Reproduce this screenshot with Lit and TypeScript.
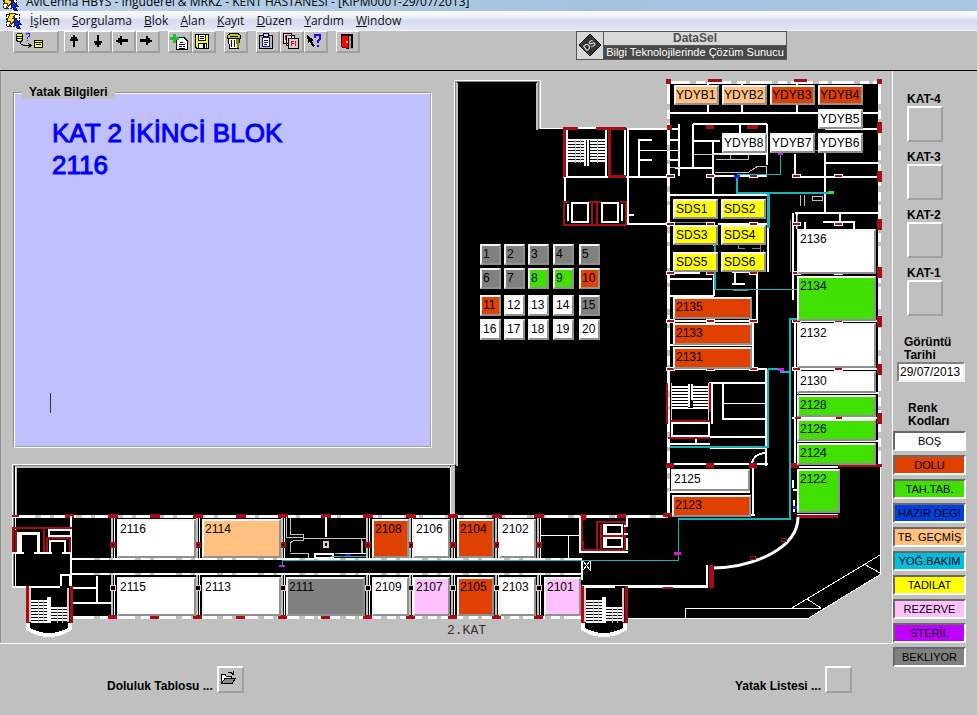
import { LitElement, html, css, svg } from "lit";
import { customElement, property } from "lit/decorators.js";
import { styleMap } from "lit/directives/style-map.js";

type Status = "bos" | "dolu" | "tahliye" | "hazir" | "gecmis" | "yogun" | "tadilat" | "rezerve" | "steril" | "bekliyor";
type Room = [label: string, x: number, y: number, w: number, h: number, status: Status];

const COLORS: Record<Status, string> = {
  bos: "#ffffff",
  dolu: "#e04000",
  tahliye: "#40e000",
  hazir: "#0040e0",
  gecmis: "#ffc080",
  yogun: "#00c0e0",
  tadilat: "#ffff00",
  rezerve: "#ffc0ff",
  steril: "#c000ff",
  bekliyor: "#808080",
};

const LEGEND: [string, Status][] = [
  ["BOŞ", "bos"],
  ["DOLU", "dolu"],
  ["TAH.TAB.", "tahliye"],
  ["HAZIR DEGI", "hazir"],
  ["TB. GEÇMİŞ", "gecmis"],
  ["YOĞ.BAKIM", "yogun"],
  ["TADILAT", "tadilat"],
  ["REZERVE", "rezerve"],
  ["STERİL", "steril"],
  ["BEKLIYOR", "bekliyor"],
];

/* Drawing coordinates of the plan start at this height. */
const PLAN_TOP = 71;

const ROOMS: Room[] = [
  ["YDYB1", 674, 85, 45, 20, "gecmis"],
  ["YDYB2", 722, 85, 45, 20, "gecmis"],
  ["YDYB3", 770, 85, 45, 20, "dolu"],
  ["YDYB4", 818, 85, 45, 20, "dolu"],
  ["YDYB5", 818, 109, 45, 20, "bos"],
  ["YDYB6", 818, 133, 45, 20, "bos"],
  ["YDYB7", 770, 133, 45, 20, "bos"],
  ["YDYB8", 722, 133, 45, 20, "bos"],
  ["SDS1", 673, 199, 45, 20, "tadilat"],
  ["SDS2", 721, 199, 45, 20, "tadilat"],
  ["SDS3", 673, 225, 45, 20, "tadilat"],
  ["SDS4", 721, 225, 45, 20, "tadilat"],
  ["SDS5", 673, 252, 45, 20, "tadilat"],
  ["SDS6", 721, 252, 45, 20, "tadilat"],
  ["2136", 797, 229, 79, 45, "bos"],
  ["2134", 797, 276, 79, 45, "tahliye"],
  ["2132", 797, 323, 79, 45, "bos"],
  ["2130", 797, 371, 79, 22, "bos"],
  ["2128", 797, 395, 79, 22, "tahliye"],
  ["2126", 797, 419, 79, 22, "tahliye"],
  ["2124", 797, 443, 79, 22, "tahliye"],
  ["2122", 797, 469, 43, 44, "tahliye"],
  ["2135", 673, 297, 79, 22, "dolu"],
  ["2133", 673, 323, 79, 22, "dolu"],
  ["2131", 673, 347, 79, 22, "dolu"],
  ["2125", 671, 469, 79, 22, "bos"],
  ["2123", 672, 495, 79, 22, "dolu"],
  ["2116", 117, 519, 79, 39, "bos"],
  ["2114", 202, 519, 79, 39, "gecmis"],
  ["2108", 372, 519, 37, 39, "dolu"],
  ["2106", 413, 519, 37, 39, "bos"],
  ["2104", 457, 519, 37, 39, "dolu"],
  ["2102", 499, 519, 37, 39, "bos"],
  ["2115", 117, 577, 79, 39, "bos"],
  ["2113", 202, 577, 79, 39, "bos"],
  ["2111", 286, 577, 79, 39, "bekliyor"],
  ["2109", 372, 577, 37, 39, "bos"],
  ["2107", 413, 577, 37, 39, "rezerve"],
  ["2105", 457, 577, 37, 39, "dolu"],
  ["2103", 499, 577, 37, 39, "bos"],
  ["2101", 544, 577, 37, 39, "rezerve"],
];

const BED_COLUMNS = [480, 504, 528, 553, 579];
const BED_ROWS = [244, 268, 295, 319];
const BED_STATUS: Partial<Record<number, Status>> = {
  1: "bekliyor", 2: "bekliyor", 3: "bekliyor", 4: "bekliyor", 5: "bekliyor", 6: "bekliyor", 7: "bekliyor",
  8: "tahliye", 9: "tahliye", 10: "dolu", 11: "dolu", 15: "bekliyor",
};
const BEDS: Room[] = Array.from({ length: 20 }, (_, i): Room => [
  String(i + 1), BED_COLUMNS[i % 5], BED_ROWS[Math.floor(i / 5)], 21, 21, BED_STATUS[i + 1] ?? "bos",
]);

const treads = (x1: number, x2: number, y1: number, y2: number) => {
  let d = "";
  for (let y = y1; y <= y2; y += 3) d += `M${x1} ${y}H${x2}`;
  return d;
};

const WING_COLUMNS = [113, 155, 198, 241, 283, 326, 368, 411, 453, 497, 539];
const WING_WALLS = [113, 198, 283, 368, 411, 453, 497, 539];

/* Stairwell with a bowed landing, used at both ends of the south wing. */
const stairwell = (x: number) => svg`
  <g transform="translate(${x} 586)">
    <path class="black" d="M0 0H46V44Q23 56 0 44Z"/>
    <path class="white" stroke-width="4" d="M2 37V43Q23 55 44 43V37"/>
    <path class="white" stroke-width="2" d="M0 1H34"/>
    <path class="pink" stroke-width="2" d="M4 2V36M42 2V36"/>
    <path class="white" stroke-width="2" d="${treads(5, 22, 15, 36)}${treads(22, 41, 22, 36)}"/>
    <path class="grey" stroke-width="1" d="M12.500 14V37M17.500 14V37M31.500 21V37M36.500 21V37"/>
    <path class="white" stroke-width="4" d="M23 11V37"/>
    <path class="red" stroke-width="3" d="M1 0V37M45 0V37"/>
  </g>`;

@customElement("floor-plan")
export class FloorPlan extends LitElement {
  static styles = css`
    :host { display: block; position: relative; height: 572px; overflow: hidden; }
    svg { display: block; }
    .black { fill: #000; }
    .white { fill: none; stroke: #fff; }
    .grey { fill: none; stroke: #c0c0c0; }
    .pink { fill: none; stroke: #e8c4c4; }
    .dim { fill: none; stroke: #808080; }
    .red { fill: none; stroke: #a80c14; }
    .cyan { fill: none; stroke: #14b4bc; }
    .dash { stroke-dasharray: 22 6 9 4; }
    .mark { fill: #a80c14; }
    .magenta { fill: #d818e0; }
    .blue { fill: #2020f0; }
    .green { fill: #40d840; }
    .caption { font: 13px "Liberation Mono", monospace; fill: #333; }
    .room {
      position: absolute; box-sizing: border-box; margin: 0; padding: 1px 0 0 1px;
      display: flex; align-items: flex-start; justify-content: flex-start;
      border: 2px solid; border-color: #f4f4f4 #909090 #909090 #f4f4f4; border-radius: 0;
      font: 12px/14px "Liberation Sans", Arial, sans-serif; color: #000; white-space: nowrap; overflow: hidden;
    }
    .code { padding-left: 0; }
  `;

  private room([label, x, y, w, h, status]: Room) {
    return html`<button class=${label.startsWith("Y") ? "room code" : "room"} style=${styleMap({
      left: `${x}px`, top: `${y - PLAN_TOP}px`, width: `${w}px`, height: `${h}px`, background: COLORS[status],
    })}>${label}</button>`;
  }

  render() {
    return html`
      <svg width="892" height="572" viewBox="0 ${PLAN_TOP} 892 572" shape-rendering="crispEdges" aria-hidden="true">
        <path class="black" d="M457 82H537V129H564V128H668V81H881V574L808 618H72V587H13V465H457Z"/>
        <path class="white" stroke-width="1" d="M454.5 464V80.5H540.5V128.5H564M12.5 587V464.5H454"/>
        <path class="dim" stroke-width="1" d="M455.5 465V81.5H538.5V129M13.5 586V465.5H455"/>
        <path class="grey" stroke-width="2" d="M457 466V83M537 83V130M16 515V467H450M452 466V515M454 466V515"/>
        <path class="white" stroke-width="1" d="M15.5 467V587M450.5 467V515"/>

        <!-- service tower -->
        <path class="white" stroke-width="2" d="M578 128H596M627 129H680M567 130V176M606 130V177M625 130V177M628 130V225M563 177H667M565 177V201M639 139V177M627 215H634M626 224H670M679 124V176M639 140H652M667 140H680M639 160H652M667 160H680"/>
        <path class="white" stroke-width="1" d="M639 150.5H680"/>
        <path class="white" stroke-width="2" d="${treads(568, 605, 140, 163)}"/>
        <path class="grey" stroke-width="1" d="M575.5 139V163M580.5 139V163M597.5 139V163"/>
        <path class="black" d="M584 140H590V167H584Z"/>
        <path class="white" stroke-width="2" d="M585 140V166M588 140V166"/>
        <path class="red" stroke-width="3" d="M563 128H578M596 128H626M564 127V177M609 128V176H626"/>
        <path class="red" stroke-width="2" d="M564 201V225H626V201M592 202V225M597 202V225M563 202H569M588 202H601M620 202H626"/>
        <path class="white" stroke-width="2" d="M572 203V222H588V203ZM602 203V222H618V203ZM568 204V221M622 204V221"/>

        <!-- east block walls -->
        <path class="grey" stroke-width="3" d="M668 82H880M668 82V516M879 82V465"/>
        <path class="white dash" stroke-width="3" d="M668 82H880M668 82V516M879 82V465"/>
        <path class="white" stroke-width="2" d="M668 113H880M708 82V114M742 82V114M797 82V114M693 124V168M693 124H767M714 154H767M675 168H714M693 141H720M713 141V195M740 124V134M767 124V165M713 176H767M795 154V178M825 153V213M825 129H879M825 163H879M792 177H879M795 213H879M668 195H768"/>
        <path class="grey" stroke-width="1" d="M693 154.5H720M730.5 155V160M748.5 155V160M716 159.5H748M670 167.5H680M715 172.5H748L758 166H766V176M800 195V206M804 195V206M812 196H822V200H812Z"/>
        <path class="white" stroke-width="2" d="M793 213V275M797 214V229M805 222V230M823 222H854V230M840 213V224M668 224H672M718 224H768M768 224V272M714 224V246M668 273H700M735 272V284M732 272H758M732 284H745M757 272V321M670 279H712M670 296H714M714 272V296M668 321H757M753 321V370M668 345H753M668 369H767M793 275V300M795 320V466M792 321H879M792 369H879M797 393H879M792 418H879M797 441H879M797 467H838"/>
        <path class="dim" stroke-width="1" d="M760.5 225V272M763.5 250V262M797.5 215V275M738 240V248H745M752 248H760M790.5 220V272M798 330V360M798 375V410M675 222.5H714M733 290H748"/>

        <!-- east staircase and wards -->
        <path class="white" stroke-width="2" d="M709 383H766M712 384V424M723 384V419H766V384M766 370V447M766 448V466M710 437H766M668 444H710M710 448H766M696 437V444M668 464H768M753 466V516M668 492H750M664 515H755M765 453Q754 454 752 463"/>
        <path class="white" stroke-width="1" d="M723 403.5H766"/>
        <path class="white" stroke-width="2" d="${treads(671, 709, 387, 409)}"/>
        <path class="black" d="M688 384H693V408H688Z"/>
        <path class="white" stroke-width="2" d="M689 384V407M692 384V400M672 423H709V436H672Z"/>
        <path class="red" stroke-width="2" d="M667 383V424M710 383V412M670 421H710M668 438H710"/>
        <path class="pink" stroke-width="1" d="M671.5 383V420M708.5 383V420"/>

        <!-- south-east terrace -->
        <path class="red" stroke-width="3" d="M838 465H882M797 516H838"/>
        <path class="white" stroke-width="1" d="M797 514.5H838M880.5 467V574M626 618.5H808L881 574M792 608L880 555M807 599L821 608M864 564L880 573M685.5 618V608.5H821"/>
        <path class="white" stroke-width="2" d="M626 587H708M793 480V488M793 490H798M794 500V512"/>
        <path class="white" stroke-width="3" shape-rendering="auto" d="M798 517C798 548 755 567 713 568"/>
        <path class="white" stroke-width="2" d="M707 565V587"/>
        <path class="red" stroke-width="5" d="M711 565V588"/>
        <ellipse class="red" cx="784" cy="540" rx="3" ry="2"/>
        <ellipse class="red" cx="753" cy="558" rx="3" ry="2"/>

        <!-- south wing -->
        <path class="grey" stroke-width="3" d="M13 516H668M72 617H582"/>
        <path class="white dash" stroke-width="3" d="M13 516H668M72 617H582"/>
        <path class="grey" stroke-width="2" d="M72 559H582M72 574H582"/>
        <path class="white dash" stroke-width="2" d="M72 559H582M72 574H582"/>
        ${WING_WALLS.map((x) => svg`
          <path class="grey" stroke-width="2" d="M${x - 1} 517V558M${x - 1} 575V617"/>
          <path class="white" stroke-width="1" d="M${x + 1}.5 517V558M${x + 1}.5 575V617"/>
          <rect class="mark" x=${x - 3} y="542" width="6" height="6"/>
          <rect class="black" x=${x - 1} y="544" width="2" height="2"/>
          <rect fill="#e8c4c4" x=${x - 3} y="585" width="6" height="6"/>
          <rect class="black" x=${x - 2} y="586" width="4" height="4"/>`)}
        ${WING_COLUMNS.map((x) => svg`
          <rect class="mark" x=${x - 5} y="514" width="10" height="4"/>
          <rect class="mark" x=${x - 5} y="615" width="9" height="4"/>`)}
        <path class="mark" d="M12 515H19V517H12ZM65 514H74V518H65ZM580 514H586V520H580ZM617 514H626V518H617ZM663 513H673V517H663ZM663 585H673V589H663Z"/>
        <path class="pink" stroke-width="2" d="M324 542H328V547H324Z"/>
        <path class="white" stroke-width="2" d="M71 516V618M12 587H61V575H70M97 576V603M72 588H97M72 603H112M70 575V587"/>
        <path class="red" stroke-width="2" d="M12 528H72M13 527V553M16 530V553M44 528V553M47 538V553M47 538H71M70 538V553"/>
        <path class="white" stroke-width="3" d="M20 552V533H38V552"/>
        <path class="white" stroke-width="2" d="M71 530H49V536H71M50 552V541H65V552M12 553H24M34 553H52M62 553H71M18 532V552"/>
        <path class="grey" stroke-width="1" d="M286.5 517V537.5H303M290.5 517V534.5H303V538.5H366M290 552V543L294 540.5H303V538M290 553.5H308V558M362.500 541V553.500H335M361 539V553"/>
        <path class="white" stroke-width="2" d="M326 517V537M315 554H333V558H315Z"/>
        <path class="white" stroke-width="1" d="M340 553.5H366M540 535.5H580M568.5 535V558M583 561L590 570M583 570L590 561M590.5 561V571"/>
        <path class="red" stroke-width="2" d="M582 516V550H625M597 550V522H625V550M601 550V524M601 536H625"/>
        <path class="red" stroke-width="3" d="M582 541V550H586M581 588V600"/>
        <path class="white" stroke-width="2" d="M580 516V552H628M604 525H622V534H604ZM604 538H622V547H604ZM627 517V526M624 526H628M624 534H628M627 538V550M582 561V580M582 586H708M606 526V534M606 538V547"/>
        ${stairwell(26)}
        ${stairwell(581)}

        <!-- column grid of the east block -->
        ${[176, 224, 273, 321, 369].map((y) => [670, 710, 753, 796, 838].map((x) => svg`
          <rect fill="#fff" x=${x - 4} y=${y - 2} width="9" height="4"/>
          <rect class="mark" x=${x - 3} y=${y - 1} width="7" height="2"/>`))}
        ${[670, 710, 753, 795].map((x) => svg`<rect class="mark" x=${x - 4} y="463" width="8" height="5"/>`)}
        ${[122, 171, 219, 267, 316, 364, 413].map((y) => svg`<rect class="mark" x="877" y=${y} width="5" height="11"/>`)}
        <path class="mark" d="M666 79H671V84H666ZM877 79H882V84H877ZM708 79H722V82H708ZM794 79H807V82H794ZM667 125H672V130H667ZM706 125H714V129H706ZM747 125H758V129H747ZM795 417H801V419H795ZM836 417H842V419H836Z"/>

        <!-- corridor lines -->
        <path class="cyan" stroke-width="1" d="M780.5 153V174.5H737M815 150.5H820M715 289.5H797M678.5 519V560.5H282V566M330 556.5H366"/>
        <path class="cyan" stroke-width="2" d="M737 175V193H832M715 245V290M797 319H790V519H678M768 369V447H670M768 369H781V372H790"/>
        <path class="cyan" stroke-width="3" d="M768 193V228"/>
        <path class="magenta" d="M778 368H784V371H778ZM674 552H681V555H674ZM279 565H285V567H279ZM778 153H783V155H778Z"/>
        <path class="blue" d="M734 175H740V178H734ZM345 554H351V556H345ZM793 506H797V509H793Z"/>
        <path class="green" d="M828 191H834V194H828Z"/>
        <text class="caption" x="447" y="634">2.KAT</text>
      </svg>
      ${ROOMS.map((r) => this.room(r))}
      ${BEDS.map((r) => this.room(r))}
    `;
  }
}

const ICONS: Record<string, unknown> = {
  query: svg`<path fill="#ff0" stroke="#000" d="M1.5 2.5L3 1.5H6L7.5 2.5V8L6 9.5H3L1.5 8ZM19.500 8.500H27.500V15.500H19.500Z"/><path fill="none" stroke="#000" d="M1.500 4.500H7.500M1.500 6.500H7.500M19.500 10.500H27.500M21 12.500H26M5.500 10V11.500L8.500 13.500H16M13.500 11.500L16 13.500L13.500 15.500"/><path fill="none" stroke="#22c" stroke-width="1" d="M11.500 3V1.500H14.500V4L12.500 5.500V7M12.500 8V9"/>`,
  up: svg`<path d="M7 3H9V5H11V7H12V9H9V15H7V9H4V7H5V5H7Z"/>`,
  down: svg`<path d="M7 15H9V13H11V11H12V9H9V3H7V9H4V11H5V13H7Z"/>`,
  left: svg`<path d="M2 8H4V6H6V4H8V7H14V10H8V13H6V11H4V10H2Z"/>`,
  right: svg`<path d="M14 8H12V6H10V4H8V7H2V10H8V13H10V11H12V10H14Z"/>`,
  add: svg`<path fill="#fff" stroke="#000" d="M6.500 5.500H14L17.500 9V17.500H6.500Z"/><path stroke="#000" d="M10 10.500H13M9 12.500H15M9 14.500H12M13 14.500H15M9 16H15"/><path fill="#2b3" d="M3 2H6V5H9V8H6V11H3V8H0V5H3Z"/>`,
  save: svg`<path fill="#ff0" stroke="#000" d="M1.500 2.500H14.500V16.500H3L1.500 15Z"/><path fill="#fff" stroke="#000" d="M4.500 2.500H11.500V8.500H4.500ZM4.500 11.500H12.500V16.500H4.500Z"/><path stroke="#000" d="M6 4.500H10M6 6.500H10"/><path fill="#000" d="M9 12H11V16H9Z"/>`,
  trash: svg`<path fill="#cc0" stroke="#000" d="M1.500 3.500L4 1.500H12L14.500 3.500V6.500H1.500Z"/><path fill="#fff" stroke="#000" d="M2.500 6.500H13.500L12.500 16.500H3.500Z"/><path fill="#880" d="M10 7H13V16H11Z"/><path stroke="#000" d="M5.500 8V15M8.500 8V15M4 4.500H12"/>`,
  paste: svg`<path fill="#bbb" stroke="#000" d="M1.500 3.500H14.500V16.500H1.500Z"/><path fill="#fff" stroke="#119" d="M4.500 5.500H11.500V14.500H4.500Z"/><path fill="#ddd" stroke="#000" d="M5.500 1.500H10.500V4.500H5.500Z"/><path stroke="#119" d="M6 8.500H10M6 10.500H10M6 12.500H9"/>`,
  list: svg`<path fill="#ddd" stroke="#000" d="M1.500 1.500H9.500V11.500H1.500ZM4.500 3.500H12.500V13.500H4.500Z"/><path fill="#ccc" stroke="#000" d="M6.500 6.500H16.500V16.500H6.500Z"/><path fill="none" stroke="#d11" d="M3 3.500H8M3.500 3V8M9.500 14V9.500H12M9.500 11.500H11.500M13.500 9V14"/>`,
  help: svg`<path d="M1 3L8 8L6 9L9 14L7 15L4 10L2 11Z"/><path fill="none" stroke="#11d" stroke-width="2" d="M9 6V3H14V7L12 9V11M12 13V15"/>`,
  exit: svg`<path fill="#999" d="M10 3H15V17H10Z"/><path fill="#000" d="M3 2H15V16H13V4H3Z"/><path fill="#f00" stroke="#400" d="M3.500 3.500H10.500V16.500L3.500 15Z"/><path fill="#ff0" d="M8 9H10V11H8Z"/>`,
  folder: svg`<path fill="#fff" stroke="#000" d="M2.500 14.500V5.500H6L7.500 7.500H12.500V14.500Z"/><path fill="#888" stroke="#000" d="M2.500 14.500L6 9.500H16.500L13 14.500Z"/><path fill="none" stroke="#000" d="M9 3.500H12L14.500 5.500V2M12.500 5.500H15"/>`,
};

const appIcon = html`<svg class="app-icon" width="18" height="17" viewBox="0 0 18 17" shape-rendering="crispEdges" aria-hidden="true">
  <path fill="#fff" stroke="#113" stroke-dasharray="2 1" d="M1.500 2.500H14.500V14.500H1.500Z"/>
  <path fill="#fd2" stroke="#430" d="M5 1L11 2L8 6H12L4 15L6 9H2Z"/>
  <path fill="#12e" stroke="#115" d="M9 5L16 12H13L15 16L12 16L11 13L9 15Z"/>
</svg>`;

@customElement("tool-button")
export class ToolButton extends LitElement {
  @property() icon = "";
  @property() label = "";
  @property({ type: Boolean, reflect: true }) wide = false;
  static styles = css`
    :host { display: block; width: 24px; height: 22px; }
    :host([wide]) { width: 46px; }
    button {
      box-sizing: border-box; width: 100%; height: 100%; margin: 0; padding: 0; display: flex;
      background: #c0c0c0; border: 1px solid; border-width: 1px 2px 2px 1px; border-radius: 0;
      border-color: #fff #a0a0a0 #a0a0a0 #fff;
    }
    svg { display: block; margin-left: 1px; }
  `;
  render() {
    return html`<button aria-label=${this.label}>
      <svg width=${this.wide ? 40 : 19} height="18" viewBox="0 0 ${this.wide ? 40 : 19} 18" shape-rendering="crispEdges">${ICONS[this.icon]}</svg>
    </button>`;
  }
}

const TOOLS: { icon: string; label: string; wide?: boolean }[][] = [
  [{ icon: "query", label: "Sorgula", wide: true }],
  [
    { icon: "up", label: "Yukarı" },
    { icon: "down", label: "Aşağı" },
    { icon: "left", label: "Geri" },
    { icon: "right", label: "İleri" },
  ],
  [{ icon: "add", label: "Yeni kayıt" }, { icon: "save", label: "Kaydet" }],
  [{ icon: "trash", label: "Sil" }],
  [
    { icon: "paste", label: "Yapıştır" },
    { icon: "list", label: "Liste" },
    { icon: "help", label: "Yardım" },
  ],
  [{ icon: "exit", label: "Çıkış" }],
];

@customElement("app-root")
export class AppRoot extends LitElement {
  static styles = css`
    :host {
      display: flex; flex-direction: column; min-height: 100vh; overflow: hidden;
      background: #c0c0c0; color: #000; font: 12px/14px "Liberation Sans", Arial, sans-serif;
    }
    .title {
      display: flex; align-items: flex-end; height: 11px; overflow: hidden; padding-left: 2px; gap: 6px;
      background: linear-gradient(90deg, #bcd2e8, #a4c2e0 60%, #a9c6e2);
      font: 12px/14px "Open Sans", "Noto Sans", sans-serif; white-space: pre;
    }
    .title span { margin-bottom: 2px; }
    .app-icon { flex: none; }
    .menu {
      display: flex; align-items: center; gap: 12px; height: 19px; padding-left: 5px;
      background: linear-gradient(#fbfcfe, #e6ebf6 40%, #d5dbee 45%, #e2e6f5); border-bottom: 1px solid #f4f4f4;
    }
    .menu .app-icon { margin-right: -5px; }
    .menu button {
      border: 0; padding: 0; background: none; color: #111;
      font: 12px/18px "Open Sans", "Noto Sans", sans-serif;
    }
    .tools { display: flex; align-items: flex-start; height: 39px; padding-left: 13px; gap: 8px; border-bottom: 1px solid #000; }
    .tools .group { display: flex; }
    .tools .group:first-child { margin-right: -3px; }
    .brand {
      display: grid; grid-template-columns: 27px 182px; box-sizing: border-box; margin-left: 208px;
      border: 1px solid #555; background: #d8d8d8; line-height: 13px; text-align: center;
    }
    .brand svg { grid-row: span 2; display: block; border-right: 1px solid #555; }
    .brand strong { color: #505050; border-bottom: 1px solid #555; }
    .brand span { background: #484848; color: #fff; white-space: nowrap; font-size: 11px; }
    .mark-text { font: 9px "Liberation Sans", Arial, sans-serif; fill: #fff; }
    .body { flex: 1; display: grid; grid-template-columns: minmax(0, 1fr) 84px; }
    .work { display: flex; flex-direction: column; }
    .plan {
      display: grid; border-right: 1px solid #fff; border-bottom: 1px solid #fff;
      box-shadow: inset 1px 0 #909090;
    }
    .plan > * { grid-area: 1 / 1; }
    .info {
      position: relative; box-sizing: border-box; width: 419px; height: 363px; align-self: start; margin: 14px 0 0 13px;
      padding: 0; border: 0; display: flex; flex-direction: column;
    }
    .info legend { padding: 0 7px; margin-left: 9px; background: #c0c0c0; font-weight: bold; position: relative; z-index: 1; }
    .card {
      box-sizing: border-box; flex: 1; height: 356px; margin-top: -7px; padding: 24px 38px 0; background: #c0c0ff;
      border: 1px solid; border-color: #909090 #fff #fff #909090; box-shadow: inset 1px 1px #fff, inset -1px -1px #a0a0a0;
      display: flex; flex-direction: column;
    }
    .card p { margin: 0; color: #0000ff; font-size: 26px; line-height: 32px; white-space: nowrap; }
    .card p { -webkit-text-stroke: 1px #0000ff; }
    .caret { width: 1px; height: 20px; margin: auto 0 34px -2px; background: #333; }
    .side { display: flex; flex-direction: column; padding: 21px 11px 0 0; font-weight: bold; }
    .floor { display: flex; flex-direction: column; align-items: flex-start; margin: 0 0 8px 14px; }
    .square {
      box-sizing: border-box; background: #c0c0c0; padding: 0; border: 2px solid; border-radius: 0;
      border-color: #fff #a0a0a0 #a0a0a0 #fff; width: 36px; height: 36px;
    }
    .date { margin-top: 12px; line-height: 13px; }
    .date span { display: block; margin-left: 11px; width: 50px; }
    .date input {
      box-sizing: border-box; display: block; width: 68px; height: 20px; margin: 0 0 0 4px; padding: 0 1px;
      border: 2px solid; border-color: #808080 #f0f0f0 #f0f0f0 #808080; border-radius: 0; background: #fff;
      font: 12px/14px "Liberation Sans", Arial, sans-serif; color: #000;
    }
    .codes h2 { margin: 20px 0 3px 15px; font-size: 12px; line-height: 13px; width: 50px; }
    .codes ul { list-style: none; margin: 0; padding: 0; display: grid; gap: 4px; }
    .codes li {
      box-sizing: border-box; height: 20px; border: 2px solid; border-color: #686868 #fff #fff #686868;
      font-weight: normal; font-size: 11px; line-height: 16px; text-align: center; white-space: nowrap; overflow: hidden;
    }
    .foot { display: flex; justify-content: space-between; padding: 22px 41px 22px 107px; font-weight: bold; }
    .foot div { display: flex; align-items: flex-end; gap: 4px; }
    .foot .square { width: 27px; height: 27px; }
    .foot .square svg { display: block; }
  `;

  private menuItem(text: string) {
    return html`<button><u>${text[0]}</u>${text.slice(1)}</button>`;
  }

  render() {
    return html`
      <header>
        <div class="title">${appIcon}<span>AviCenna HBYS - Ingüderel &amp; MRKZ - KENT HASTANESİ - [KIPM0001-29/07/2013]</span></div>
        <nav class="menu">
          ${appIcon}
          ${["İşlem", "Sorgulama", "Blok", "Alan", "Kayıt", "Düzen", "Yardım", "Window"].map((m) => this.menuItem(m))}
        </nav>
        <div class="tools">
          ${TOOLS.map((group) => html`<div class="group">${group.map((t) =>
            html`<tool-button .icon=${t.icon} .label=${t.label} .wide=${!!t.wide}></tool-button>`)}</div>`)}
          <div class="brand">
            <svg width="26" height="27" viewBox="0 0 26 27" aria-hidden="true">
              <path fill="#333" stroke="#000" d="M13 2L24 13L13 24L2 13Z"/>
              <text class="mark-text" x="6" y="16" transform="rotate(-35 13 13)">DS</text>
            </svg>
            <strong>DataSel</strong>
            <span>Bilgi Teknolojilerinde Çözüm Sunucu</span>
          </div>
        </div>
      </header>
      <main class="body">
        <div class="work">
          <section class="plan">
            <floor-plan></floor-plan>
            <fieldset class="info">
              <legend>Yatak Bilgileri</legend>
              <div class="card">
                <p>KAT 2 İKİNCİ BLOK</p>
                <p>2116</p>
                <div class="caret"></div>
              </div>
            </fieldset>
          </section>
          <footer class="foot">
            <div>
              <label for="table">Doluluk Tablosu ...</label>
              <button class="square" id="table"><svg width="20" height="20" viewBox="0 1 20 20" shape-rendering="crispEdges">${ICONS.folder}</svg></button>
            </div>
            <div>
              <label for="beds">Yatak Listesi ...</label>
              <button class="square" id="beds"></button>
            </div>
          </footer>
        </div>
        <aside class="side">
          ${[4, 3, 2, 1].map((n) => html`<div class="floor">
            <label for="kat${n}">KAT-${n}</label>
            <button class="square" id="kat${n}"></button>
          </div>`)}
          <label class="date"><span>Görüntü Tarihi</span><input value="29/07/2013"></label>
          <section class="codes">
            <h2>Renk Kodları</h2>
            <ul>${LEGEND.map(([name, status]) => html`<li style=${styleMap({ background: COLORS[status] })}>${name}</li>`)}</ul>
          </section>
        </aside>
      </main>
    `;
  }
}
